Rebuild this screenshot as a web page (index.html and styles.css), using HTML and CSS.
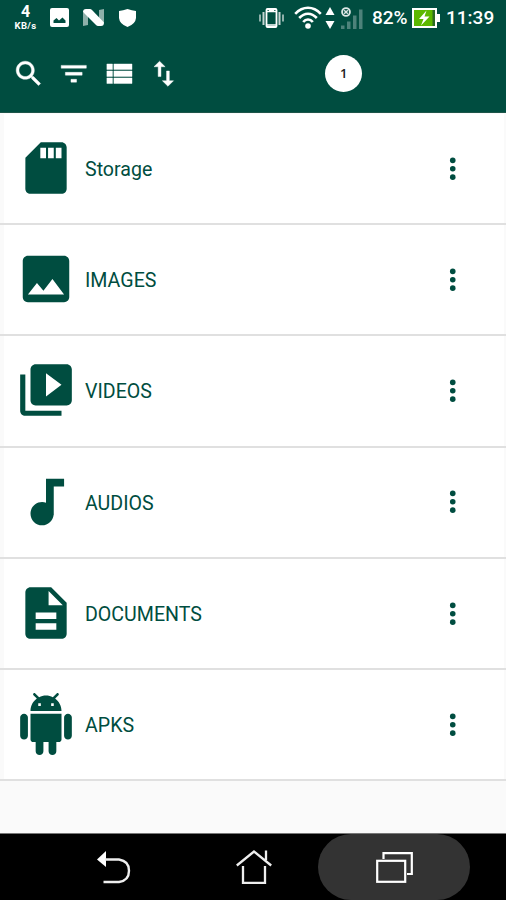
FILE: index.html
```html
<!DOCTYPE html>
<html lang="en">
<head>
    <meta charset="UTF-8">
    <meta name="viewport" content="width=device-width, initial-scale=1.0">
    <title>File Manager</title>
    <link rel="stylesheet" href="styles.css">
</head>
<body>
    <div class="screen">
        <header class="header">
            <!-- Status bar -->
            <div class="status">
                <div class="speed"><span class="speed-value">4</span><span class="speed-unit">KB/s</span></div>
                <svg class="st-image" width="19" height="19" viewBox="0 0 19 19"><rect width="19" height="19" rx="2" fill="#fff"/><path d="M3.500 15v-2.500L6.500 10l2.500 2.500 3.500-3 3 3V15z" fill="#004d40"/></svg>
                <svg class="st-n" width="21" height="17" viewBox="0 0 21 17"><path d="M0 3l5 3v10l-5 1zM16 1l5-1v14l-5-3z" fill="#8eb0aa"/><path d="M0 3Q0 0 3 0h4q1 0 2 1l12 12.500q0 3.500-3 3.500h-3q-1 0-2-1z" fill="#fff"/></svg>
                <svg class="st-shield" width="17" height="18" viewBox="0 0 17 18"><path d="M0 2Q4 1.500 8.500 0 13 1.500 17 2v7q-.5 6-8.500 9Q.5 15 0 9z" fill="#fff"/></svg>
                <svg class="st-vibrate" width="25" height="20" viewBox="0 0 25 20"><rect x="7.500" y="1" width="10" height="18" rx="1" fill="none" stroke="#fff" stroke-width="1.800"/><path d="M8 3.500h9M10 2.500h5M8 17h9" stroke="#fff" stroke-width="1.500"/><path d="M4.500 4v13M20.500 4v13" stroke="#c5d6d3" stroke-width="2"/><path d="M1 6.500v7M24 6.500v7" stroke="#8eb0aa" stroke-width="2"/></svg>
                <svg class="st-wifi" width="28" height="23" viewBox="0 0 28 23"><g fill="none" stroke="#fff" stroke-width="2.600"><path d="M1.200 7.800Q7 1.800 14 1.800t12.800 6M5.200 12q4-4.300 8.800-4.300t8.800 4.300M9.200 16q2-2.500 4.800-2.500t4.800 2.500"/></g><circle cx="14" cy="20" r="2.800" fill="#fff"/></svg>
                <svg class="st-arrows" width="10" height="22" viewBox="0 0 10 22"><path d="M5 0l4.500 8h-9zM.5 14h9L5 22z" fill="#fff"/></svg>
                <svg class="st-signal" width="22" height="22" viewBox="0 0 22 22"><path d="M0 18.500h3.500V22H0zM6 14.500h3.500V22H6zM12 8.500h3.500V22H12zM18 2.500h3.500V22H18z" fill="#4d827a"/><circle cx="5" cy="5" r="3.900" fill="none" stroke="#dce7e5" stroke-width="1.900"/><path d="M3.200 3.200l3.600 3.600M6.800 3.200L3.200 6.800" stroke="#dce7e5" stroke-width="1.400"/></svg>
                <span class="battery-text">82%</span>
                <svg class="st-battery" width="28" height="20" viewBox="0 0 28 20"><path d="M24.500 6H28v8h-3.500z" fill="#fff"/><rect x="1" y="1" width="23" height="18" fill="#2d6b22" stroke="#fff" stroke-width="2"/><path d="M2 2h18.500v16H2z" fill="#5cb800"/><path d="M14.500 2.500L7 11h4.500L9 17.500 17.500 8.500h-5z" fill="#fff"/></svg>
                <span class="clock">11:39</span>
            </div>
            <!-- Toolbar -->
            <div class="toolbar">
                <svg class="tool" viewBox="0 0 24 24"><path d="M15.500 14h-.79l-.28-.27C15.410 12.590 16 11.110 16 9.500 16 5.910 13.090 3 9.500 3S3 5.910 3 9.500 5.910 16 9.500 16c1.610 0 3.090-.59 4.230-1.570l.27.28v.79l5 4.990L20.490 19l-4.990-5zm-6 0C7.010 14 5 11.990 5 9.500S7.010 5 9.500 5 14 7.010 14 9.500 11.990 14 9.500 14z"/></svg>
                <svg class="tool" viewBox="0 0 24 24"><path d="M10 18h4v-2h-4v2zM3 6v2h18V6H3zm3 7h12v-2H6v2z"/></svg>
                <svg class="tool" viewBox="0 0 24 24"><path d="M3.500 14h4v-4h-4v4zm0 5h4v-4h-4v4zm0-10h4V5h-4v4zm5 5h13v-4h-13v4zm0 5h13v-4h-13v4zm0-14v4h13V5h-13z"/></svg>
                <svg class="tool" viewBox="0 0 24 24"><path d="M16 17.010V10h-2v7.010h-3L15 21l4-3.990h-3zM9 3L5 6.990h3V14h2V6.990h3L9 3z"/></svg>
                <span class="count">1</span>
            </div>
        </header>

        <main class="list">
            <div class="row"><div class="card">
                <svg class="icon" viewBox="0 0 24 24"><path d="M18 2h-8L4.020 8 4 20c0 1.100.9 2 2 2h12c1.100 0 2-.9 2-2V4c0-1.100-.9-2-2-2zm-6 6.200h-2.200V4.200H12v4zm3 0h-2.200V4.200H15v4zm3 0h-2.200V4.200H18v4z"/></svg>
                <span class="label">Storage</span>
                <svg class="more" viewBox="0 0 24 24"><circle cx="12" cy="6" r="2"/><circle cx="12" cy="12" r="2"/><circle cx="12" cy="18" r="2"/></svg>
            </div></div>
            <div class="row"><div class="card">
                <svg class="icon" viewBox="0 0 24 24"><path d="M21 19V5c0-1.100-.9-2-2-2H5c-1.100 0-2 .9-2 2v14c0 1.100.9 2 2 2h14c1.100 0 2-.9 2-2zM8.500 13.500l2.500 3.010L14.500 12l4.500 6H5l3.500-4.500z"/></svg>
                <span class="label">IMAGES</span>
                <svg class="more" viewBox="0 0 24 24"><circle cx="12" cy="6" r="2"/><circle cx="12" cy="12" r="2"/><circle cx="12" cy="18" r="2"/></svg>
            </div></div>
            <div class="row"><div class="card">
                <svg class="icon" viewBox="0 0 24 24"><path d="M4 6H2v14c0 1.100.9 2 2 2h14v-2H4V6zm16-4H8c-1.100 0-2 .9-2 2v12c0 1.100.9 2 2 2h12c1.100 0 2-.9 2-2V4c0-1.100-.9-2-2-2zm-8 12.500v-9l6 4.500-6 4.500z"/></svg>
                <span class="label">VIDEOS</span>
                <svg class="more" viewBox="0 0 24 24"><circle cx="12" cy="6" r="2"/><circle cx="12" cy="12" r="2"/><circle cx="12" cy="18" r="2"/></svg>
            </div></div>
            <div class="row"><div class="card">
                <svg class="icon" viewBox="0 0 24 24"><path d="M12 3v9.280c-.47-.17-.97-.28-1.500-.28C8.010 12 6 14.010 6 16.500S8.010 21 10.500 21c2.310 0 4.200-1.750 4.450-4H15V6h4V3h-7z"/></svg>
                <span class="label">AUDIOS</span>
                <svg class="more" viewBox="0 0 24 24"><circle cx="12" cy="6" r="2"/><circle cx="12" cy="12" r="2"/><circle cx="12" cy="18" r="2"/></svg>
            </div></div>
            <div class="row"><div class="card">
                <svg class="icon" viewBox="0 0 24 24"><path d="M14 2H6c-1.100 0-1.990.9-1.990 2L4 20c0 1.100.89 2 1.990 2H18c1.100 0 2-.9 2-2V8l-6-6zm2 16.500H8V16h8v2.500zm0-4.200H8v-2.500h8v2.500zM13 9V3.500L18.500 9H13z"/></svg>
                <span class="label">DOCUMENTS</span>
                <svg class="more" viewBox="0 0 24 24"><circle cx="12" cy="6" r="2"/><circle cx="12" cy="12" r="2"/><circle cx="12" cy="18" r="2"/></svg>
            </div></div>
            <div class="row"><div class="card">
                <svg class="icon" viewBox="0 0 24 24"><path d="M6 18c0 .55.45 1 1 1h1v3.500c0 .83.67 1.500 1.500 1.500s1.500-.67 1.500-1.500V19h2v3.500c0 .83.67 1.500 1.500 1.500s1.500-.67 1.500-1.500V19h1c.55 0 1-.45 1-1V8H6v10zM3.500 8C2.670 8 2 8.670 2 9.500v7c0 .83.67 1.500 1.500 1.500S5 17.330 5 16.500v-7C5 8.670 4.330 8 3.500 8zm17 0c-.83 0-1.500.67-1.500 1.500v7c0 .83.67 1.500 1.500 1.500s1.500-.67 1.500-1.500v-7c0-.83-.67-1.500-1.500-1.500zm-4.970-5.840l1.300-1.300c.2-.2.2-.51 0-.71-.2-.2-.51-.2-.71 0l-1.480 1.480C13.850 1.230 12.950 1 12 1c-.96 0-1.860.23-2.660.63L7.850.15c-.2-.2-.51-.2-.71 0-.2.2-.2.51 0 .71l1.310 1.310C6.970 3.260 6 5.010 6 7h12c0-1.990-.97-3.750-2.470-4.840zM10 5H9V4h1v1zm5 0h-1V4h1v1z"/></svg>
                <span class="label">APKS</span>
                <svg class="more" viewBox="0 0 24 24"><circle cx="12" cy="6" r="2"/><circle cx="12" cy="12" r="2"/><circle cx="12" cy="18" r="2"/></svg>
            </div></div>
        </main>

        <!-- Navigation keys -->
        <nav class="nav">
            <svg class="nav-back" width="34" height="33" viewBox="0 0 34 33"><path d="M0 8.500L9 0v16z" fill="#fff"/><path d="M8 8.500h14q10 1.500 10 11.200T22 31H6.500" fill="none" stroke="#eee" stroke-width="2.400"/></svg>
            <svg class="nav-home" width="36" height="34" viewBox="0 0 36 34"><path d="M.8 15.500L18 1.500l17.200 14M30 10V.5M7 16v17h22V16" fill="none" stroke="#eee" stroke-width="2.300"/></svg>
            <span class="nav-recent"><svg width="37" height="31" viewBox="0 0 37 31"><path d="M7.500 7V1.200h28.300V22H31" fill="none" stroke="#fff" stroke-width="2.200"/><rect x="1.200" y="8.800" width="28" height="21" fill="none" stroke="#fff" stroke-width="2.200"/></svg></span>
        </nav>
    </div>
</body>
</html>
```
FILE: styles.css
```css
* {
    box-sizing: border-box;
}

body {
    margin: 0;
    font-family: Roboto, sans-serif;
    background-color: #fafafa;
    color: #004d40;
}

svg {
    display: block;
    flex: none;
}

.screen {
    display: flex;
    flex-direction: column;
    width: 506px;
    height: 900px;
    overflow: hidden;
}

.header {
    height: 113px;
    background-color: #004d40;
    border-bottom: 1px solid #1d5549;
    color: #fff;
}

/* Status bar */
.status {
    display: flex;
    align-items: center;
    height: 35px;
    padding-left: 13px;
}

.speed {
    display: flex;
    flex-direction: column;
    align-items: center;
    width: 25px;
    font-weight: bold;
}

.speed-value {
    font-size: 16px;
    line-height: 16px;
}

.speed-unit {
    font-size: 9.5px;
    line-height: 12px;
    letter-spacing: 0.4px;
}

.st-image {
    margin-left: 12px;
}

.st-n {
    margin-left: 14px;
}

.st-shield {
    margin-left: 15px;
}

.st-vibrate {
    margin-left: 123px;
}

.st-wifi {
    margin-left: 10px;
}

.st-arrows {
    margin-left: 3px;
}

.st-signal {
    margin-left: 6px;
}

.battery-text,
.clock {
    padding-top: 1px;
    font-size: 19px;
    font-weight: 500;
    line-height: 24px;
}

.battery-text {
    width: 40px;
    margin-left: 9px;
}

.clock {
    margin-left: 6px;
}

/* Toolbar */
.toolbar {
    display: flex;
    align-items: center;
    gap: 11.7px;
    height: 77px;
    padding-left: 11.5px;
}

.tool {
    width: 33.5px;
    height: 33.5px;
    fill: #fff;
    stroke: #fff;
    stroke-width: 0.3;
}

.count {
    width: 37px;
    height: 37px;
    margin-left: 133px;
    border-radius: 50%;
    background-color: #fff;
    color: #222;
    font-family: "Open Sans", sans-serif;
    font-size: 13px;
    font-weight: 600;
    line-height: 37px;
    text-align: center;
}

/* File categories */
.list {
    height: 720px;
    padding-top: 1px;
}

.row {
    height: 111.2px;
    padding: 0 2px 0 4px;
    border-bottom: 2px solid #e0e0e0;
}

.card {
    display: flex;
    align-items: center;
    height: 100%;
    padding: 0 34.5px 0 11px;
    background-color: #fff;
}

.icon {
    width: 62px;
    height: 62px;
    margin-bottom: 1px;
    fill: #004d40;
}

.label {
    flex: 1;
    margin-left: 8px;
    padding-top: 2px;
    font-size: 19.6px;
}

.more {
    width: 33.5px;
    height: 33.5px;
    fill: #004d40;
}

/* Navigation keys */
.nav {
    display: flex;
    align-items: center;
    height: 67px;
    padding-left: 97px;
    border-top: 1px solid #777;
    background-color: #000;
}

.nav-home {
    margin-left: 105px;
}

.nav-recent {
    display: flex;
    align-items: center;
    justify-content: center;
    width: 152px;
    height: 66px;
    margin-left: 46px;
    border-radius: 33px;
    background-color: #333;
}
```
